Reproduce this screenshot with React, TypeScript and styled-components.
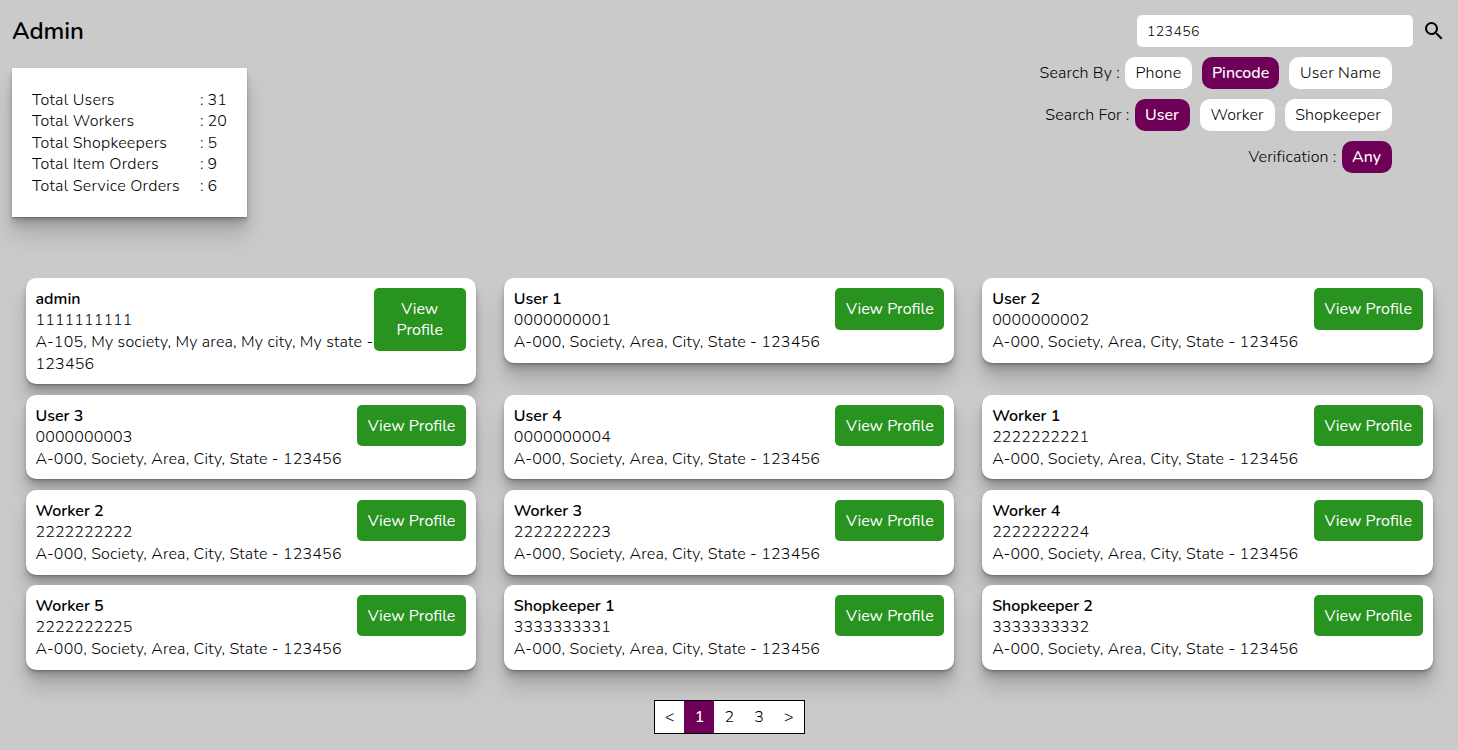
import React from "react";
import styled, { createGlobalStyle } from "styled-components";

const GlobalStyle = createGlobalStyle`
  * { box-sizing: border-box; }
  body {
    margin: 0;
    background: #cacaca;
    color: #000;
    font-family: Nunito, "Open Sans", "Noto Sans", sans-serif;
    font-size: 16px;
    font-weight: 300;
    line-height: 21.6px;
  }
`;

const Page = styled.main`
  height: 750px;
  overflow: hidden;
`;

const Header = styled.header`
  display: flex;
  justify-content: space-between;
  height: 277.95px;
  padding: 15px 12px 0;
`;

const Title = styled.h1`
  margin: 0 0 21px;
  font-size: 24px;
  line-height: 32px;
  font-weight: 600;
  letter-spacing: -0.1px;
`;

const shadow = `
  box-shadow:
    0 1px 1px rgba(0, 0, 0, 0.11),
    0 2px 2px rgba(0, 0, 0, 0.1),
    0 4px 5px rgba(0, 0, 0, 0.1),
    0 8px 8px rgba(0, 0, 0, 0.1),
    0 18px 20px rgba(0, 0, 0, 0.15);
`;

const Stats = styled.dl`
  display: grid;
  grid-template-columns: 168px auto;
  align-content: start;
  width: 235px;
  height: 148.5px;
  margin: 0;
  padding: 21.5px 20px 20px;
  background: #fff;
  ${shadow}
`;

const StatLabel = styled.dt`
  letter-spacing: 0.25px;
  white-space: nowrap;
`;

const StatValue = styled.dd`
  margin: 0;
  white-space: nowrap;
`;

const SearchPanel = styled.section`
  display: flex;
  flex-direction: column;
  align-items: flex-end;
  gap: 10.3px;
`;

const SearchBar = styled.div`
  display: flex;
  align-items: center;
  height: 32px;
`;

const SearchInput = styled.input`
  width: 275.5px;
  height: 32.5px;
  margin-right: 9.5px;
  padding: 0 10px;
  border: 0;
  border-radius: 5px;
  background: #fff;
  font: inherit;
  font-size: 14px;
  letter-spacing: 0.4px;
  outline: none;
`;

const FilterRow = styled.div`
  display: flex;
  align-items: center;
  gap: 10px;
  margin-right: 54.5px;
`;

const FilterLabel = styled.span`
  margin-right: -5px;
  padding-top: 2px;
  letter-spacing: 0.15px;
`;

const Pill = styled.button<{ $active?: boolean; $width: number }>`
  width: ${(p) => p.$width}px;
  height: 31.6px;
  padding: 2px 0 0;
  border: 0;
  border-radius: 10px;
  background: ${(p) => (p.$active ? "#6f0058" : "#fff")};
  color: ${(p) => (p.$active ? "#fff" : "#000")};
  font: inherit;
  font-weight: ${(p) => (p.$active ? 500 : 300)};
  letter-spacing: ${(p) => (p.$active ? 0 : 0.15)}px;
  white-space: nowrap;
`;

const CardGrid = styled.section`
  display: grid;
  grid-template-columns: repeat(3, 1fr);
  align-items: start;
  gap: 10.35px 27.8px;
  padding: 0 25.3px 0 25.5px;
`;

const Card = styled.article`
  display: flex;
  justify-content: space-between;
  align-items: flex-start;
  padding: 10px;
  border-radius: 10px;
  background: #fff;
  ${shadow}
`;

const Info = styled.div`
  display: flex;
  flex-direction: column;
  padding-top: 0.85px;
  margin-bottom: -0.85px;
`;

const Name = styled.strong`
  font-weight: 600;
`;

const Phone = styled.span`
  letter-spacing: 0.1px;
`;

const Address = styled.span`
  letter-spacing: 0.2px;
`;

const ProfileButton = styled.button<{ $narrow?: boolean }>`
  flex: none;
  width: ${(p) => (p.$narrow ? 92.5 : 109)}px;
  padding: 10.85px ${(p) => (p.$narrow ? 20 : 0)}px 9.15px;
  border: 0;
  border-radius: 5px;
  background: #28931f;
  color: #fff;
  font: inherit;
  font-weight: 400;
`;

const Pagination = styled.nav`
  display: flex;
  width: 151px;
  height: 34px;
  margin: 30px auto 0;
  border: 1px solid #000;
  background: #fff;
`;

const PageItem = styled.span<{ $active?: boolean }>`
  flex: 1;
  display: flex;
  align-items: center;
  justify-content: center;
  padding: 2px 0 0 0.5px;
  background: ${(p) => (p.$active ? "#6f0058" : "#fff")};
  color: ${(p) => (p.$active ? "#fff" : "#000")};
  font-weight: ${(p) => (p.$active ? 500 : 300)};
`;

const stats: [string, number][] = [
  ["Total Users", 31],
  ["Total Workers", 20],
  ["Total Shopkeepers", 5],
  ["Total Item Orders", 9],
  ["Total Service Orders", 6],
];

type Option = { text: string; width: number; active?: boolean };

const filters: { label: string; options: Option[] }[] = [
  {
    label: "Search By :",
    options: [
      { text: "Phone", width: 67 },
      { text: "Pincode", width: 77.5, active: true },
      { text: "User Name", width: 102.2 },
    ],
  },
  {
    label: "Search For :",
    options: [
      { text: "User", width: 55, active: true },
      { text: "Worker", width: 75 },
      { text: "Shopkeeper", width: 107 },
    ],
  },
  { label: "Verification :", options: [{ text: "Any", width: 50, active: true }] },
];

const commonAddress = "A-000, Society, Area, City, State - 123456";

const users: { name: string; phone: string; address?: string }[] = [
  { name: "admin", phone: "1111111111", address: "A-105, My society, My area, My city, My state - 123456" },
  { name: "User 1", phone: "0000000001" },
  { name: "User 2", phone: "0000000002" },
  { name: "User 3", phone: "0000000003" },
  { name: "User 4", phone: "0000000004" },
  { name: "Worker 1", phone: "2222222221" },
  { name: "Worker 2", phone: "2222222222" },
  { name: "Worker 3", phone: "2222222223" },
  { name: "Worker 4", phone: "2222222224" },
  { name: "Worker 5", phone: "2222222225" },
  { name: "Shopkeeper 1", phone: "3333333331" },
  { name: "Shopkeeper 2", phone: "3333333332" },
];

const SearchIcon = () => (
  <svg width="24" height="24" viewBox="0 0 24 24" fill="#000" aria-hidden="true">
    <path d="M15.5 14h-.79l-.28-.27A6.471 6.471 0 0 0 16 9.5 6.5 6.5 0 1 0 9.5 16c1.61 0 3.09-.59 4.23-1.57l.27.28v.79l5 4.99L20.49 19l-4.99-5zm-6 0C7.01 14 5 11.99 5 9.5S7.01 5 9.5 5 14 7.01 14 9.5 11.99 14 9.5 14z" />
  </svg>
);

export default function App() {
  return (
    <Page>
      <GlobalStyle />
      <Header>
        <div>
          <Title>Admin</Title>
          <Stats>
            {stats.map(([label, value]) => (
              <React.Fragment key={label}>
                <StatLabel>{label}</StatLabel>
                <StatValue>: {value}</StatValue>
              </React.Fragment>
            ))}
          </Stats>
        </div>
        <SearchPanel>
          <SearchBar>
            <SearchInput defaultValue="123456" />
            <SearchIcon />
          </SearchBar>
          {filters.map((filter) => (
            <FilterRow key={filter.label}>
              <FilterLabel>{filter.label}</FilterLabel>
              {filter.options.map((o) => (
                <Pill key={o.text} $active={o.active} $width={o.width}>
                  {o.text}
                </Pill>
              ))}
            </FilterRow>
          ))}
        </SearchPanel>
      </Header>
      <CardGrid>
        {users.map((user) => (
          <Card key={user.name}>
            <Info>
              <Name>{user.name}</Name>
              <Phone>{user.phone}</Phone>
              <Address>{user.address ?? commonAddress}</Address>
            </Info>
            <ProfileButton $narrow={!!user.address}>View Profile</ProfileButton>
          </Card>
        ))}
      </CardGrid>
      <Pagination>
        {["<", "1", "2", "3", ">"].map((item) => (
          <PageItem key={item} $active={item === "1"}>
            {item}
          </PageItem>
        ))}
      </Pagination>
    </Page>
  );
}
